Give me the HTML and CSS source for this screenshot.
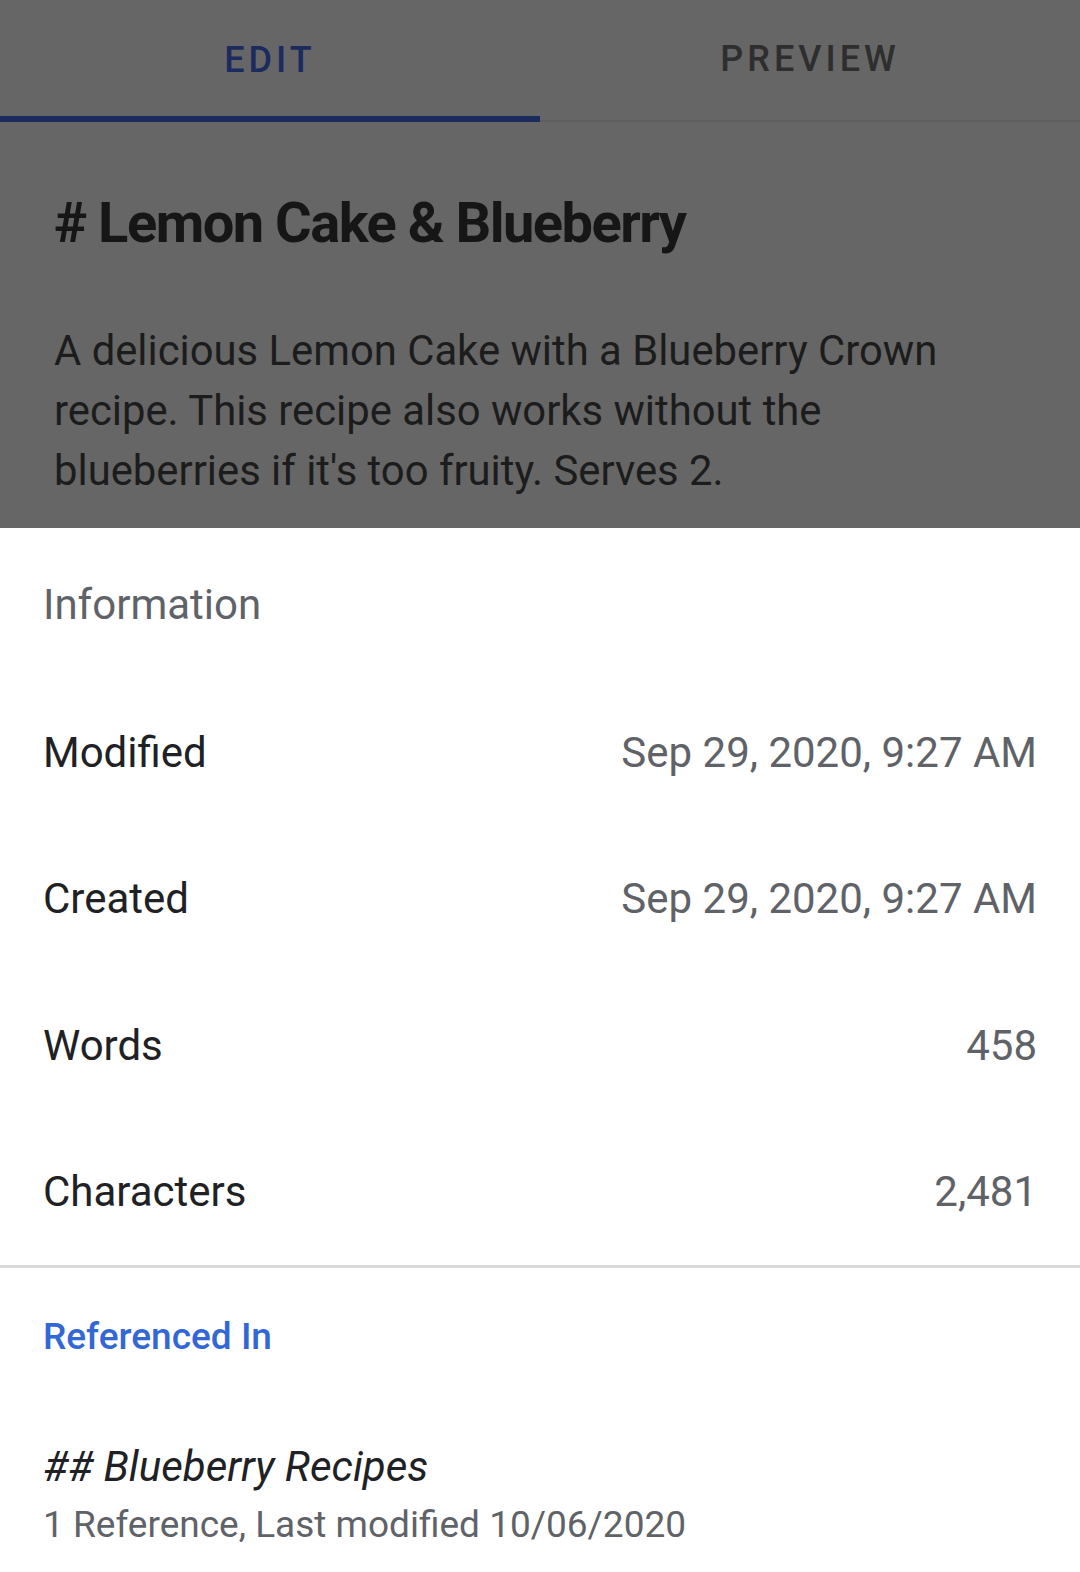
FILE: index.html
```html
<!DOCTYPE html>
<html>
<head>
<meta charset="utf-8">
<link rel="stylesheet" href="styles.css">
</head>
<body>
<div class="screen">
  <div class="dimmed">
    <div class="tabs">
      <div class="tab active">EDIT</div>
      <div class="tab">PREVIEW</div>
    </div>
    <div class="editor">
      <h1 class="title"># Lemon Cake &amp; Blueberry</h1>
      <p class="desc">A delicious Lemon Cake with a Blueberry Crown recipe. This recipe also works without the blueberries if it's too fruity. Serves 2.</p>
    </div>
  </div>
  <div class="sheet">
    <div class="section-label">Information</div>
    <div class="rows">
      <div class="row"><span class="label">Modified</span><span class="value">Sep 29, 2020, 9:27 AM</span></div>
      <div class="row"><span class="label">Created</span><span class="value">Sep 29, 2020, 9:27 AM</span></div>
      <div class="row"><span class="label">Words</span><span class="value">458</span></div>
      <div class="row"><span class="label">Characters</span><span class="value">2,481</span></div>
    </div>
    <div class="divider"></div>
    <div class="ref-head">Referenced In</div>
    <div class="ref-item">
      <div class="ref-title">## Blueberry Recipes</div>
      <div class="ref-sub">1 Reference, Last modified 10/06/2020</div>
    </div>
  </div>
</div>
</body>
</html>
```
FILE: styles.css
```css
html, body {
  margin: 0;
  padding: 0;
  background: #ffffff;
}
body {
  font-family: Roboto, "Noto Sans", sans-serif;
}
.screen {
  width: 1080px;
  height: 1572px;
  display: flex;
  flex-direction: column;
  overflow: hidden;
}
.dimmed {
  flex: 0 0 528px;
  height: 528px;
  overflow: hidden;
  background: #666666;
  display: flex;
  flex-direction: column;
}
.tabs {
  display: flex;
  flex: 0 0 122px;
  height: 122px;
  border-bottom: 2px solid #5e5e5e;
  box-sizing: border-box;
}
.tab {
  flex: 1;
  display: flex;
  align-items: center;
  justify-content: center;
  font-size: 36px;
  font-weight: 500;
  letter-spacing: 4px;
  color: #2e2e2e;
  padding-bottom: 2px;
  box-sizing: border-box;
}
.tab.active {
  color: #1c2b5e;
  border-bottom: 6px solid #1c2b5e;
  margin-bottom: -2px;
  padding-bottom: 0;
  padding-top: 4px;
}
.editor {
  padding: 0 54px;
}
.title {
  margin: 61px 0 0 0;
  font-size: 56px;
  line-height: 80px;
  font-weight: 700;
  color: #161616;
  letter-spacing: -1.5px;
}
.desc {
  margin: 58px 0 0 0;
  max-width: 940px;
  font-size: 41.8px;
  line-height: 60px;
  color: #1c1c1c;
}
.sheet {
  flex: 1 1 auto;
  background: #ffffff;
}
.section-label {
  padding: 52px 43px 0;
  height: 50px;
  line-height: 50px;
  font-size: 42px;
  color: #5f6368;
}
.rows {
  padding-top: 49px;
}
.row {
  display: flex;
  justify-content: space-between;
  align-items: center;
  padding: 0 43px 0 43px;
  height: 146.5px;
  font-size: 42px;
}
.label {
  color: #202124;
}
.value {
  color: #5f6368;
}
.divider {
  height: 3px;
  background: #dadada;
}
.ref-head {
  padding: 44px 43px 0;
  height: 50px;
  line-height: 50px;
  font-size: 37px;
  font-weight: 500;
  color: #3367d6;
}
.ref-item {
  padding: 80px 43px 0;
}
.ref-title {
  font-size: 42px;
  font-style: italic;
  line-height: 50px;
  color: #202124;
}
.ref-sub {
  font-size: 37px;
  line-height: 50px;
  margin-top: 8px;
  color: #5f6368;
}
```
